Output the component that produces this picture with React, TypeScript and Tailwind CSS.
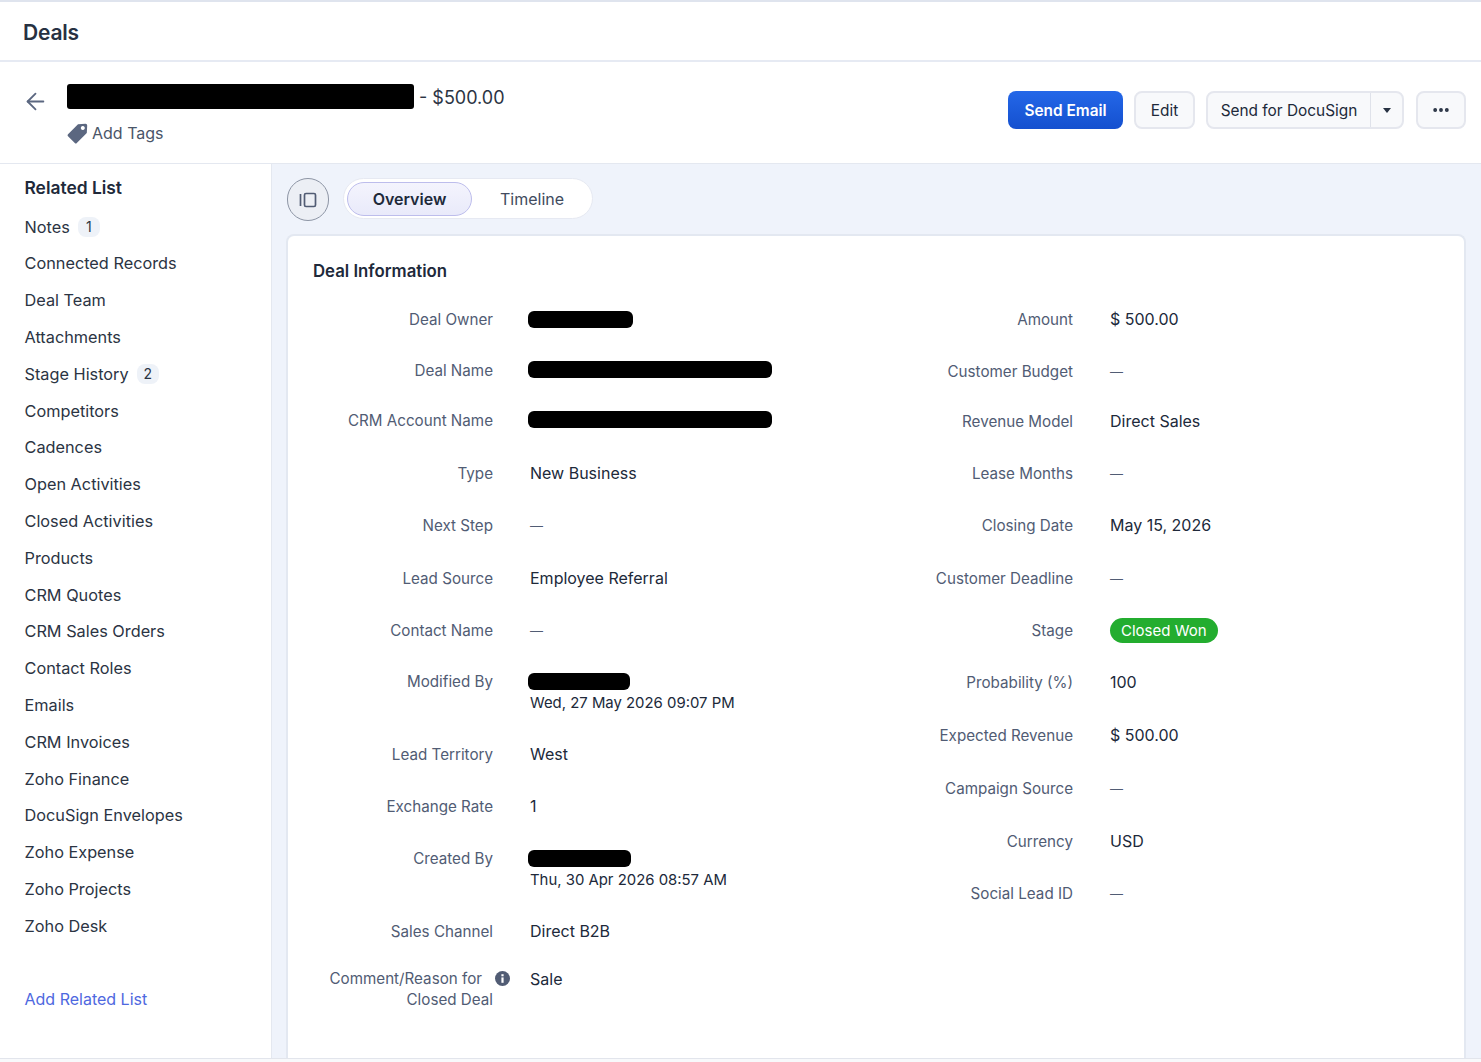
import { ArrowLeft, Ellipsis } from "lucide-react";

const relatedList = [
  { name: "Notes", count: 1 },
  { name: "Connected Records" },
  { name: "Deal Team" },
  { name: "Attachments" },
  { name: "Stage History", count: 2 },
  { name: "Competitors" },
  { name: "Cadences" },
  { name: "Open Activities" },
  { name: "Closed Activities" },
  { name: "Products" },
  { name: "CRM Quotes" },
  { name: "CRM Sales Orders" },
  { name: "Contact Roles" },
  { name: "Emails" },
  { name: "CRM Invoices" },
  { name: "Zoho Finance" },
  { name: "DocuSign Envelopes" },
  { name: "Zoho Expense" },
  { name: "Zoho Projects" },
  { name: "Zoho Desk" },
];

type Row = {
  label: string;
  value?: string;
  bar?: string;
  sub?: string;
  height: string;
};

const leftRows: Row[] = [
  { label: "Deal Owner", bar: "w-[105px] mt-[3px]", height: "h-[51px]" },
  { label: "Deal Name", bar: "w-[244px] mt-[2px]", height: "h-[50px]" },
  { label: "CRM Account Name", bar: "w-[244px] mt-[2px]", height: "h-[53px]" },
  { label: "Type", value: "New Business", height: "h-[52px]" },
  { label: "Next Step", value: "—", height: "h-[53px]" },
  { label: "Lead Source", value: "Employee Referral", height: "h-[52px]" },
  { label: "Contact Name", value: "—", height: "h-[51px]" },
  { label: "Modified By", bar: "w-[102px] mt-[3px]", sub: "Wed, 27 May 2026 09:07 PM", height: "h-[73px]" },
  { label: "Lead Territory", value: "West", height: "h-[52px]" },
  { label: "Exchange Rate", value: "1", height: "h-[52px]" },
  { label: "Created By", bar: "w-[103px] mt-[3px]", sub: "Thu, 30 Apr 2026 08:57 AM", height: "h-[73px]" },
  { label: "Sales Channel", value: "Direct B2B", height: "h-[48px]" },
];

const rightRows: Row[] = [
  { label: "Amount", value: "$ 500.00", height: "h-[52px]" },
  { label: "Customer Budget", value: "—", height: "h-[50px]" },
  { label: "Revenue Model", value: "Direct Sales", height: "h-[52px]" },
  { label: "Lease Months", value: "—", height: "h-[52px]" },
  { label: "Closing Date", value: "May 15, 2026", height: "h-[53px]" },
  { label: "Customer Deadline", value: "—", height: "h-[52px]" },
  { label: "Stage", value: "Closed Won", height: "h-[52px]" },
  { label: "Probability (%)", value: "100", height: "h-[53px]" },
  { label: "Expected Revenue", value: "$ 500.00", height: "h-[53px]" },
  { label: "Campaign Source", value: "—", height: "h-[53px]" },
  { label: "Currency", value: "USD", height: "h-[52px]" },
  { label: "Social Lead ID", value: "—", height: "h-[52px]" },
];

function FieldValue({ value }: { value: string }) {
  if (value === "Closed Won") {
    return (
      <span className="inline-block h-[25px] -translate-y-px rounded-full bg-[#23ad2f] px-[11px] text-[15px] leading-[25px] text-white">
        {value}
      </span>
    );
  }
  if (value === "—") {
    return <span className="text-[13px] text-[#515c74]">{value}</span>;
  }
  return <>{value}</>;
}

function FieldRow({ row }: { row: Row }) {
  return (
    <div className={`flex gap-[37px] ${row.height}`}>
      <div className="w-[207px] pt-px text-right text-[15.2px] text-[#515c74]">{row.label}</div>
      <div className="flex-1 text-[#20293a]">
        {row.bar && <div className={`-ml-[2px] h-[17px] rounded-[6px] bg-black ${row.bar}`} />}
        {row.sub && <div className="mt-[2px] text-[14.9px]">{row.sub}</div>}
        {row.value && <FieldValue value={row.value} />}
      </div>
    </div>
  );
}

function TagIcon() {
  return (
    <svg width="21" height="21" viewBox="0 0 21 21" className="text-[#5b6780]">
      <path
        fill="currentColor"
        fillRule="evenodd"
        d="M11 1.2 L18.6 0.8 Q20.2 0.8 20.2 2.4 L19.8 10 L9.8 20 Q8.8 21 7.8 20 L1 13.2 Q0 12.2 1 11.2 Z M15.8 3 a2 2 0 1 0 0.01 0 Z"
      />
    </svg>
  );
}

export default function App() {
  return (
    <div className="flex h-[1062px] flex-col overflow-hidden bg-white text-[16px] leading-[22px] text-[#20293a] [font-family:Inter,sans-serif]">
      <div className="flex h-[62px] shrink-0 items-center border-y-2 border-t-[#dfe4ee] border-b-[#e6eaf3] pl-[23px] pt-[4px] text-[21px] font-semibold tracking-[-0.2px] text-[#273142]">
        Deals
      </div>

      <div className="flex h-[102px] shrink-0 border-b border-[#e4e8f0]">
        <ArrowLeft className="ml-[22px] mt-[26px] h-[27px] w-[27px] text-[#5b6780]" strokeWidth={1.6} />
        <div className="ml-[18px] pt-[22px]">
          <div className="flex items-center">
            <div className="h-[25px] w-[347px] rounded-[3px] bg-black" />
            <span className="ml-[5px] translate-y-px text-[18px] text-[#2b3443]">- $500.00</span>
          </div>
          <div className="mt-[13px] flex items-center gap-[4px] text-[#4a5568]">
            <TagIcon />
            Add Tags
          </div>
        </div>
        <div className="ml-auto mr-[15px] mt-[29px] flex h-[38px] gap-[11px] text-[15.4px] font-medium">
          <button className="w-[115px] rounded-[8px] bg-gradient-to-b from-[#2467e8] to-[#1450cf] pt-px font-semibold text-white">
            Send Email
          </button>
          <button className="w-[61px] rounded-[8px] border-2 border-[#e5e7ee] bg-[#f8f9fb] pt-px font-normal">
            Edit
          </button>
          <div className="flex w-[198px] rounded-[8px] border-2 border-[#e5e7ee] bg-[#f8f9fb] font-normal">
            <button className="flex-1 border-r border-[#dfe2ea] pt-px">Send for DocuSign</button>
            <button className="flex w-[31px] items-center justify-center">
              <span className="h-0 w-0 border-x-[4px] border-t-[5px] border-x-transparent border-t-[#273142]" />
            </button>
          </div>
          <button className="ml-px flex w-[50px] items-center justify-center rounded-[8px] border-2 border-[#e5e7ee] bg-[#f8f9fb]">
            <Ellipsis className="h-[20px] w-[20px] text-[#273142]" strokeWidth={2.6} />
          </button>
        </div>
      </div>

      <div className="flex min-h-0 flex-1">
        <aside className="flex w-[272px] shrink-0 flex-col border-r border-[#e4e8f0] pl-[24.5px] pt-[13px]">
          <div className="mb-[9.3px] text-[17.4px] font-semibold">Related List</div>
          {relatedList.map((item) => (
            <div
              key={item.name}
              className="flex h-[36.8px] shrink-0 items-center gap-[8px] text-[16.3px] text-[#2b3443]"
            >
              {item.name}
              {item.count && (
                <span className="flex h-[20px] w-[22px] items-center justify-center rounded-[8px] bg-[#eef2f8] text-[14px]">
                  {item.count}
                </span>
              )}
            </div>
          ))}
          <div className="mt-[44.2px] text-[#4e68e0]">Add Related List</div>
        </aside>

        <main className="flex min-w-0 flex-1 flex-col bg-[#eff3fb] pl-[14px] pr-[15px] pt-[14px]">
          <div className="ml-px flex h-[43px] shrink-0 items-start gap-[14px]">
            <button className="flex h-[43px] w-[42px] items-center justify-center rounded-full border border-[#8d95a5] bg-[#eceff5]">
              <svg width="18" height="16" viewBox="0 0 18 16" fill="none" stroke="#515c74" strokeWidth="1.7">
                <rect x="5.5" y="1.5" width="11" height="13" rx="1.5" />
                <path d="M1.5 2v12" />
              </svg>
            </button>
            <div className="flex h-[41px] w-[250px] items-center rounded-full border border-[#e6e9f2] bg-white pl-[3px]">
              <div className="flex h-[34px] w-[125px] items-center justify-center rounded-full border border-[#bdbdec] bg-gradient-to-b from-[#f4f4fd] to-[#e9eafa] font-semibold">
                Overview
              </div>
              <div className="flex-1 text-center text-[#414b5e]">Timeline</div>
            </div>
          </div>

          <div className="mt-[13px] min-h-0 flex-1 rounded-t-[8px] border-2 border-b-0 border-[#e3e8f1] bg-white">
            <div className="pl-[25px] pt-[24px] text-[16.8px] font-semibold">Deal Information</div>
            <div className="mt-[26px] grid grid-cols-[580px_1fr]">
              <div className="-ml-[2px]">
                {leftRows.map((row) => (
                  <FieldRow key={row.label} row={row} />
                ))}
                <div className="flex gap-[37px]">
                  <div className="w-[207px] text-right text-[15.2px] leading-[21px] text-[#515c74]">
                    <div className="-mr-[17px] flex items-center justify-end gap-[13px]">
                      Comment/Reason for
                      <svg width="15" height="15" viewBox="0 0 15 15">
                        <circle cx="7.5" cy="7.5" r="7.5" fill="#515c74" />
                        <rect x="6.4" y="6.4" width="2.2" height="5.4" fill="#fff" />
                        <rect x="6.4" y="3.2" width="2.2" height="2.1" fill="#fff" />
                      </svg>
                    </div>
                    Closed Deal
                  </div>
                  <div className="flex-1">Sale</div>
                </div>
              </div>
              <div className="-ml-[2px]">
                {rightRows.map((row) => (
                  <FieldRow key={row.label} row={row} />
                ))}
              </div>
            </div>
          </div>
        </main>
      </div>
      <div className="h-[4px] shrink-0 border-t border-[#e2e5ec] bg-[#f8f9fb]" />
    </div>
  );
}
